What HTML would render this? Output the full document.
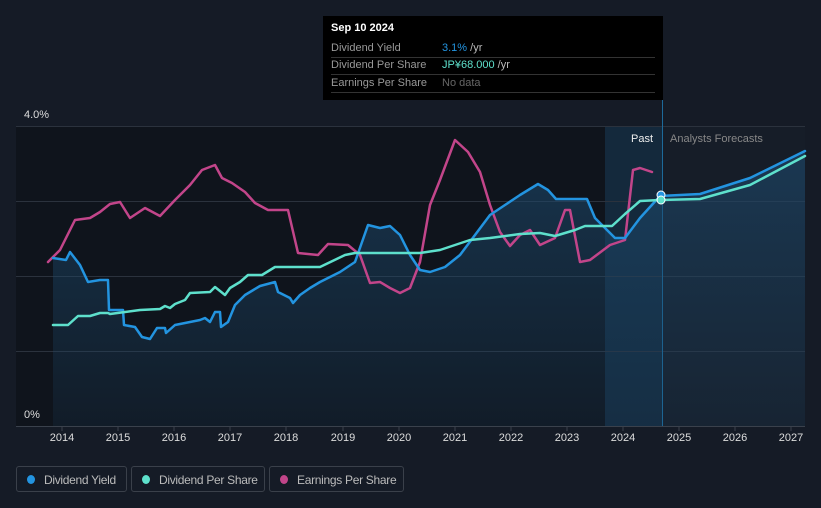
<!DOCTYPE html>
<html><head><meta charset="utf-8"><style>
body{margin:0;width:821px;height:508px;background:#151b26;font-family:"Liberation Sans",sans-serif;overflow:hidden;position:relative}
.tt{position:absolute;left:323px;top:16px;width:340px;height:84px;background:#000;color:#999;font-size:11px}
.tt .r{position:absolute;left:8px;width:324px;border-bottom:1px solid #333;height:17px;line-height:17px}
.lg{position:absolute;top:466px;height:26px;border:1px solid #3a404a;border-radius:3px;color:#bbb;font-size:12px;line-height:26px;box-sizing:border-box;padding-left:27px;letter-spacing:-0.3px;white-space:nowrap}
.lg i{position:absolute;left:10px;top:8px;width:8px;height:9px;border-radius:50%}
.ax{position:absolute;top:432px;color:#ddd;font-size:11px;width:40px;text-align:center}
</style></head><body>
<svg width="821" height="508" style="position:absolute;left:0;top:0">
<defs><linearGradient id="g" x1="0" y1="0" x2="0" y2="1"><stop offset="0" stop-color="#1d4a6e" stop-opacity=".6"/><stop offset="1" stop-color="#1d4a6e" stop-opacity=".15"/></linearGradient></defs>
<rect x="16" y="126" width="646" height="300" fill="#0f141c"/>
<rect x="662" y="126" width="143" height="300" fill="#161d28"/>
<rect x="605" y="126" width="57" height="300" fill="#17324a" opacity=".7"/>
<g stroke="#2b323d" stroke-width="1"><line x1="16" y1="126.5" x2="805" y2="126.5"/><line x1="16" y1="201.5" x2="805" y2="201.5"/><line x1="16" y1="276.5" x2="805" y2="276.5"/><line x1="16" y1="351.5" x2="805" y2="351.5"/><line x1="16" y1="426.5" x2="805" y2="426.5" stroke="#3a414c"/></g>
<line x1="662.5" y1="100" x2="662.5" y2="426" stroke="#1d6a9a"/>
<polygon fill="url(#g)" points="53,258 66,260 70,252 80,265 88,282 100,280 108,280 109,310 123,310 124,325 135,327 142,337 150,339 157,328 165,328 166,333 175,325 190,322 200,320 205,318 210,322 215,312 220,312 221,327 228,322 235,305 245,295 260,286 275,282 278,292 290,298 293,303 300,295 310,288 320,282 340,272 355,262 368,225 380,228 390,226 400,235 410,255 420,270 430,272 445,267 460,255 475,235 490,215 505,205 520,195 538,184 548,190 556,199 587,199 595,218 605,228 615,238 625,238 640,218 660,196 700,194 750,178 805,151 805,426 53,426"/>
<g stroke-linejoin="round" stroke-linecap="round">
<polyline fill="none" stroke="#c2458a" stroke-width="2.5" points="48,262 60,250 75,220 90,218 100,212 110,204 120,202 130,218 145,208 160,216 175,200 190,185 202,170 215,165 222,178 232,183 245,192 255,203 268,210 288,210 298,253 318,255 328,244 348,245 360,255 370,283 380,282 390,288 400,293 410,288 420,262 430,205 440,180 455,140 468,152 480,172 490,205 500,232 510,246 520,235 530,230 540,245 555,238 565,210 570,210 580,262 590,260 610,245 625,240 633,170 640,168 652,172"/>
<polyline fill="none" stroke="#2394e0" stroke-width="2.5" points="53,258 66,260 70,252 80,265 88,282 100,280 108,280 109,310 123,310 124,325 135,327 142,337 150,339 157,328 165,328 166,333 175,325 190,322 200,320 205,318 210,322 215,312 220,312 221,327 228,322 235,305 245,295 260,286 275,282 278,292 290,298 293,303 300,295 310,288 320,282 340,272 355,262 368,225 380,228 390,226 400,235 410,255 420,270 430,272 445,267 460,255 475,235 490,215 505,205 520,195 538,184 548,190 556,199 587,199 595,218 605,228 615,238 625,238 640,218 660,196 700,194 750,178 805,151"/>
<polyline fill="none" stroke="#5ee0cc" stroke-width="2.5" points="53,325 68,325 78,316 90,316 100,313 108,313 110,314 125,312 140,310 160,309 165,306 170,308 175,304 185,300 190,293 210,292 215,287 225,295 230,288 240,282 248,275 262,275 275,267 320,267 345,255 355,253 420,253 440,250 470,240 490,238 520,234 540,233 555,236 575,230 585,226 612,226 625,214 640,201 660,200 700,199 750,185 805,156"/>
</g>
<circle cx="661" cy="195" r="4" fill="#2394e0" stroke="#fff" stroke-width="1"/>
<circle cx="661" cy="200" r="4" fill="#5ee0cc" stroke="#fff" stroke-width="1"/>
<g stroke="#3a414c"><line x1="62" y1="426" x2="62" y2="431"/><line x1="118" y1="426" x2="118" y2="431"/><line x1="174" y1="426" x2="174" y2="431"/><line x1="230" y1="426" x2="230" y2="431"/><line x1="286" y1="426" x2="286" y2="431"/><line x1="343" y1="426" x2="343" y2="431"/><line x1="399" y1="426" x2="399" y2="431"/><line x1="455" y1="426" x2="455" y2="431"/><line x1="511" y1="426" x2="511" y2="431"/><line x1="567" y1="426" x2="567" y2="431"/><line x1="623" y1="426" x2="623" y2="431"/><line x1="679" y1="426" x2="679" y2="431"/><line x1="735" y1="426" x2="735" y2="431"/><line x1="791" y1="426" x2="791" y2="431"/></g>
<text x="24" y="118" fill="#ddd" font-size="11">4.0%</text>
<text x="24" y="418" fill="#ddd" font-size="11">0%</text>
<text x="631" y="142" fill="#eee" font-size="11">Past</text>
<text x="670" y="142" fill="#888" font-size="11">Analysts Forecasts</text>
</svg>
<div class="ax" style="left:42px">2014</div><div class="ax" style="left:98px">2015</div><div class="ax" style="left:154px">2016</div><div class="ax" style="left:210px">2017</div><div class="ax" style="left:266px">2018</div><div class="ax" style="left:323px">2019</div><div class="ax" style="left:379px">2020</div><div class="ax" style="left:435px">2021</div><div class="ax" style="left:491px">2022</div><div class="ax" style="left:547px">2023</div><div class="ax" style="left:603px">2024</div><div class="ax" style="left:659px">2025</div><div class="ax" style="left:715px">2026</div><div class="ax" style="left:771px">2027</div>
<div class="tt">
<div style="position:absolute;left:8px;top:6px;color:#fff;font-weight:bold;font-size:11px">Sep 10 2024</div>
<div class="r" style="top:24px">Dividend Yield<span style="position:absolute;left:111px"><span style="color:#2394e0">3.1%</span> <span style="color:#bbb">/yr</span></span></div>
<div class="r" style="top:41px">Dividend Per Share<span style="position:absolute;left:111px"><span style="color:#5ee0cc">JP¥68.000</span> <span style="color:#bbb">/yr</span></span></div>
<div class="r" style="top:59px">Earnings Per Share<span style="position:absolute;left:111px;color:#666">No data</span></div>
</div>
<div class="lg" style="left:16px;width:111px"><i style="background:#2394e0"></i>Dividend Yield</div>
<div class="lg" style="left:131px;width:134px"><i style="background:#5ee0cc"></i>Dividend Per Share</div>
<div class="lg" style="left:269px;width:135px"><i style="background:#c2458a"></i>Earnings Per Share</div>
</body></html>
